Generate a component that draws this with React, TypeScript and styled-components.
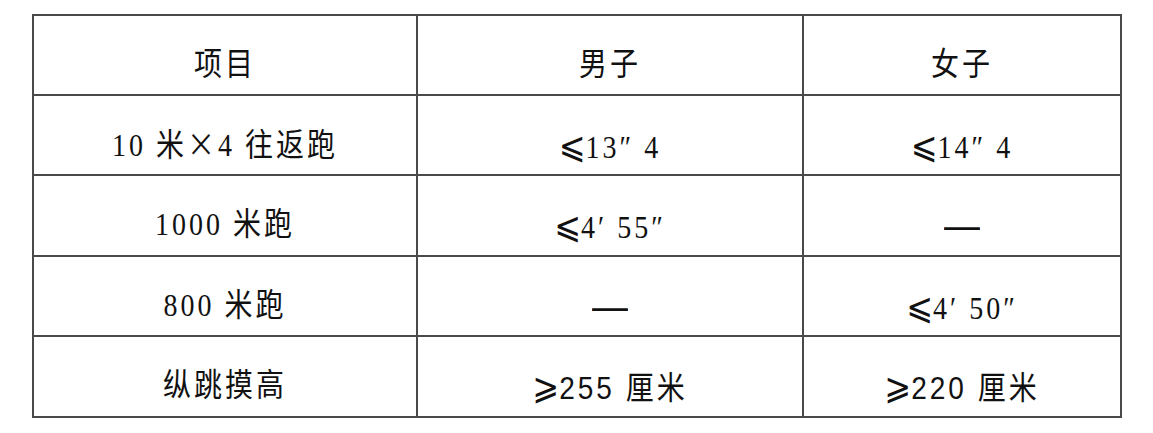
import React from "react";
import styled, { createGlobalStyle } from "styled-components";

const Global = createGlobalStyle`
  html, body { margin: 0; padding: 0; background: #ffffff; }
  body { font-family: "Liberation Serif", "Noto Sans CJK SC", "DejaVu Sans", serif; }
`;

const Page = styled.div`
  padding: 14px 0 0 32px;
`;

const Grid = styled.div`
  display: grid;
  grid-template-columns: 382px 384px 316px;
  grid-template-rows: 78px 78px 79px 78px 79px;
  gap: 2px;
  padding: 2px;
  width: max-content;
  background: #4a4a4a;
`;

const Cell = styled.div`
  background: #ffffff;
  display: flex;
  align-items: center;
  justify-content: center;
  padding-top: 19px;
  box-sizing: border-box;
`;

const Text = styled.span<{ $sans?: boolean }>`
  display: inline-block;
  font-family: ${(p) =>
    p.$sans
      ? `"Liberation Sans", "Noto Sans CJK SC", "DejaVu Sans", sans-serif`
      : `"Liberation Serif", "Noto Sans CJK SC", "DejaVu Sans", serif`};
  font-size: 28px;
  letter-spacing: 3px;
  line-height: 1;
  color: #111111;
  white-space: pre;
  transform: scaleY(1.14);
`;

const Sym = styled.span<{ $kind: "cmp" | "times" | "dash" }>`
  font-family: ${(p) =>
    p.$kind === "cmp"
      ? `"DejaVu Sans", sans-serif`
      : p.$kind === "dash"
      ? `"Liberation Sans", sans-serif`
      : `"Noto Sans CJK SC", sans-serif`};
  font-size: ${(p) => (p.$kind === "cmp" ? "32px" : p.$kind === "dash" ? "36px" : "28px")};
  letter-spacing: ${(p) => (p.$kind === "times" ? "3px" : "0px")};
  line-height: 1;
`;

const symKind = (ch: string): "cmp" | "times" | "dash" | null =>
  ch === "⩽" || ch === "⩾" ? "cmp" : ch === "×" ? "times" : ch === "—" ? "dash" : null;

function renderText(s: string) {
  const out: React.ReactNode[] = [];
  let buf = "";
  Array.from(s).forEach((ch, i) => {
    const k = symKind(ch);
    if (k) {
      if (buf) out.push(buf);
      buf = "";
      out.push(
        <Sym key={i} $kind={k}>
          {ch}
        </Sym>
      );
    } else buf += ch;
  });
  if (buf) out.push(buf);
  return out;
}

type Row = { text: string; sans?: boolean }[];

const rows: Row[] = [
  [{ text: "项目" }, { text: "男子" }, { text: "女子" }],
  [{ text: "10 米×4 往返跑" }, { text: "⩽13″ 4" }, { text: "⩽14″ 4" }],
  [{ text: "1000 米跑" }, { text: "⩽4′ 55″" }, { text: "—" }],
  [{ text: "800 米跑" }, { text: "—" }, { text: "⩽4′ 50″" }],
  [{ text: "纵跳摸高" }, { text: "⩾255 厘米", sans: true }, { text: "⩾220 厘米", sans: true }],
];

export default function App() {
  return (
    <>
      <Global />
      <Page>
        <Grid>
          {rows.map((row, ri) =>
            row.map((c, ci) => (
              <Cell key={`${ri}-${ci}`}>
                <Text $sans={c.sans}>{renderText(c.text)}</Text>
              </Cell>
            ))
          )}
        </Grid>
      </Page>
    </>
  );
}
